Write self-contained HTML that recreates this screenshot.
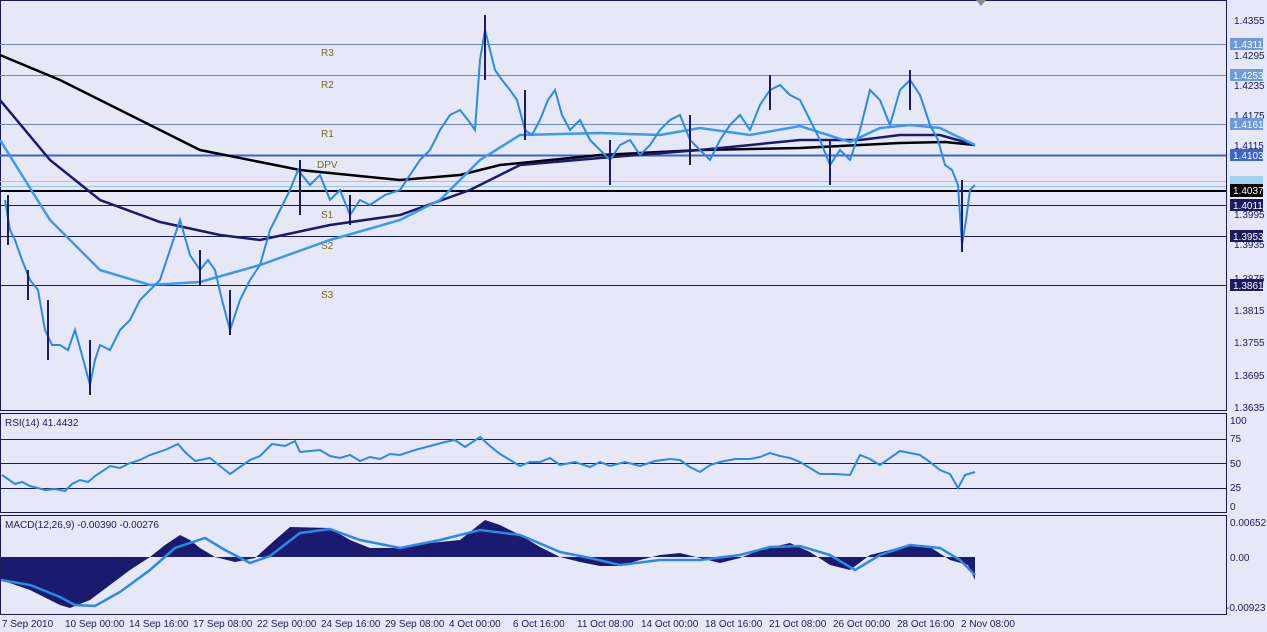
<!DOCTYPE html><html><head><style>
body{margin:0;width:1267px;height:632px;background:#e6e8f8;overflow:hidden;font-family:"Liberation Sans",sans-serif}
svg{display:block}
text{font-family:"Liberation Sans",sans-serif;font-size:10px}
</style></head><body>
<svg width="1267" height="632" viewBox="0 0 1267 632">
<rect width="1267" height="632" fill="#e6e8f8"/>
<g fill="none" stroke="#1a1a5e" stroke-width="1">
<rect x="0.5" y="0.5" width="1226" height="410"/>
<rect x="0.5" y="413.5" width="1226" height="99"/>
<rect x="0.5" y="515.5" width="1226" height="99"/>
</g>
<g stroke-width="1">
<line x1="0" x2="1226" y1="44.5" y2="44.5" stroke="#6b86c8"/>
<line x1="0" x2="1226" y1="75.5" y2="75.5" stroke="#6b86c8"/>
<line x1="0" x2="1226" y1="124.5" y2="124.5" stroke="#6b86c8"/>
<line x1="0" x2="1226" y1="155.5" y2="155.5" stroke="#3a64d0" stroke-width="2"/>
<line x1="0" x2="1226" y1="181.5" y2="181.5" stroke="#9fc4e8"/>
<line x1="0" x2="1226" y1="186.5" y2="186.5" stroke="#9fc4e8"/>
<line x1="0" x2="1226" y1="191" y2="191" stroke="#000" stroke-width="2"/>
<line x1="0" x2="1226" y1="205.5" y2="205.5" stroke="#1a1a5e"/>
<line x1="0" x2="1226" y1="236.5" y2="236.5" stroke="#1a1a5e"/>
<line x1="0" x2="1226" y1="285.5" y2="285.5" stroke="#1a1a5e"/>
</g>
<g fill="#7a6a1a" font-size="11"><text x="321" y="56">R3</text><text x="321" y="88">R2</text><text x="321" y="137">R1</text><text x="317" y="168">DPV</text><text x="321" y="218">S1</text><text x="321" y="249">S2</text><text x="321" y="298">S3</text></g>
<polyline fill="none" stroke="#000" stroke-width="2.5" points="0,55 60,80 120,110 200,150 300,170 400,180 460,175 500,165 600,155 700,150 800,148 900,143 945,142 975,145"/>
<polyline fill="none" stroke="#1a1a6e" stroke-width="2.5" points="0,100 50,160 100,200 160,222 220,235 260,240 330,225 400,215 470,190 520,165 600,158 700,150 800,140 860,140 900,135 940,135 975,145"/>
<polyline fill="none" stroke="#3a9af0" stroke-width="2.5" points="0,140 50,220 100,270 150,285 200,282 260,265 330,240 400,220 440,200 480,160 520,135 600,133 660,135 700,128 750,135 800,126 850,142 880,128 910,125 940,128 975,145"/>
<polyline fill="none" stroke="#2a8ae8" stroke-width="2" points="5,200 10,230 15,240 22,260 30,280 38,290 45,330 52,345 60,345 68,350 75,330 82,355 90,385 95,360 100,345 110,350 120,330 130,320 140,300 150,290 160,280 170,250 180,220 190,255 200,270 208,260 215,270 222,300 230,330 240,300 250,280 260,265 270,230 280,210 290,190 298,170 310,185 320,175 330,200 340,190 350,215 360,200 370,205 385,195 400,190 410,175 420,160 430,150 440,130 450,115 460,110 468,120 475,130 480,60 485,30 490,50 495,70 502,80 510,90 517,100 525,130 532,135 540,120 548,100 555,90 562,115 570,130 580,120 590,140 600,150 610,160 620,145 630,140 640,155 650,145 660,130 670,120 680,115 690,140 700,150 710,160 720,140 730,125 740,115 750,130 760,105 770,90 780,85 790,95 800,100 810,120 820,140 830,165 840,150 850,160 860,130 870,90 880,100 890,125 900,90 910,80 920,95 930,125 938,140 945,165 952,170 958,185 962,245 966,220 970,190 975,185"/>
<g stroke="#1a1a6e" stroke-width="2"><line x1="8" y1="195" x2="8" y2="245"/><line x1="28" y1="270" x2="28" y2="300"/><line x1="48" y1="300" x2="48" y2="360"/><line x1="90" y1="340" x2="90" y2="395"/><line x1="200" y1="250" x2="200" y2="285"/><line x1="230" y1="290" x2="230" y2="335"/><line x1="300" y1="160" x2="300" y2="215"/><line x1="350" y1="195" x2="350" y2="225"/><line x1="485" y1="15" x2="485" y2="80"/><line x1="525" y1="90" x2="525" y2="140"/><line x1="610" y1="140" x2="610" y2="185"/><line x1="690" y1="115" x2="690" y2="165"/><line x1="770" y1="75" x2="770" y2="110"/><line x1="830" y1="140" x2="830" y2="185"/><line x1="910" y1="70" x2="910" y2="110"/><line x1="962" y1="180" x2="962" y2="252"/></g>
<g fill="#1a1a5e"><text x="1234" y="24">1.4355</text><text x="1234" y="59">1.4295</text><text x="1234" y="89">1.4235</text><text x="1234" y="119">1.4175</text><text x="1234" y="149">1.4115</text><text x="1234" y="218">1.3995</text><text x="1234" y="248">1.3935</text><text x="1234" y="282">1.3875</text><text x="1234" y="314">1.3815</text><text x="1234" y="346">1.3755</text><text x="1234" y="379">1.3695</text><text x="1234" y="411">1.3635</text></g>
<g font-size="10">
<rect x="1230" y="38" width="33" height="12" fill="#6b9ae0"/><text x="1233" y="48" fill="#fff">1.4311</text>
<rect x="1230" y="69" width="33" height="12" fill="#6b9ae0"/><text x="1233" y="79" fill="#fff">1.4253</text>
<rect x="1230" y="118" width="33" height="12" fill="#6b9ae0"/><text x="1233" y="128" fill="#fff">1.4161</text>
<rect x="1230" y="149" width="33" height="12" fill="#3a64d0"/><text x="1233" y="159" fill="#fff">1.4103</text>
<rect x="1230" y="176" width="33" height="8" fill="#9fd4f0"/>
<rect x="1230" y="184" width="33" height="13" fill="#000"/><text x="1233" y="194" fill="#fff">1.4037</text>
<rect x="1230" y="199" width="33" height="12" fill="#1a1a5e"/><text x="1233" y="209" fill="#fff">1.4011</text>
<rect x="1230" y="230" width="33" height="12" fill="#1a1a5e"/><text x="1233" y="240" fill="#fff">1.3953</text>
<rect x="1230" y="279" width="33" height="12" fill="#1a1a5e"/><text x="1233" y="289" fill="#fff">1.3861</text>
</g>
<polygon points="976,0 986,0 981,6" fill="#888"/>
<text x="5" y="426" fill="#1a1a5e">RSI(14) 41.4432</text>
<g stroke="#1a1a5e"><line x1="0" x2="1226" y1="439.5" y2="439.5"/><line x1="0" x2="1226" y1="463.5" y2="463.5"/><line x1="0" x2="1226" y1="488.5" y2="488.5"/></g>
<polyline fill="none" stroke="#2a8ae8" stroke-width="2" points="2,475 15,484 22,482 30,486 45,490 55,489 65,491 72,484 80,480 88,482 95,476 110,466 120,468 130,463 140,460 150,455 165,450 178,444 185,452 195,461 210,458 220,466 230,474 240,467 250,460 260,456 272,444 285,446 295,441 300,452 320,450 330,456 340,458 350,455 360,461 370,457 380,459 390,454 400,455 415,450 430,446 445,442 455,440 465,447 480,437 490,446 500,454 510,460 520,466 530,462 540,462 550,458 560,465 575,462 590,467 600,462 610,466 625,462 640,466 655,461 670,459 680,460 690,467 700,472 710,465 720,462 735,459 750,459 760,457 770,453 780,456 790,458 800,462 810,468 820,474 835,474 850,475 860,455 870,459 880,465 890,458 900,451 910,453 920,455 930,462 940,470 950,474 958,488 965,475 975,472"/>
<g fill="#1a1a5e"><text x="1230" y="424">100</text><text x="1230" y="442">75</text><text x="1230" y="467">50</text><text x="1230" y="491">25</text><text x="1230" y="510">0</text></g>
<text x="5" y="528" fill="#1a1a5e">MACD(12,26,9) -0.00390 -0.00276</text>
<path fill="#1a1a6e" d="M1,557 L1,580 30,590 60,605 70,608 90,600 110,585 130,570 150,557 165,545 180,535 190,540 200,548 215,557 235,562 255,558 275,540 290,527 330,528 350,540 370,548 400,548 430,543 460,540 485,520 500,525 520,535 540,547 560,557 580,562 600,566 620,566 640,560 660,555 680,553 700,558 720,563 740,558 760,550 790,543 810,552 830,565 850,570 870,555 890,550 910,544 930,547 950,560 968,565 975,580 975,557 Z"/>
<polyline fill="none" stroke="#2a8ae8" stroke-width="2.5" points="1,580 30,585 60,597 75,605 95,606 120,592 150,570 175,548 205,538 225,550 250,563 270,556 300,533 330,529 360,540 400,548 440,540 480,530 520,535 560,552 590,558 620,565 660,560 700,560 740,555 770,547 800,546 830,555 855,570 880,555 910,545 940,548 960,560 975,575"/>
<g fill="#1a1a5e"><text x="1230" y="526">0.00652</text><text x="1230" y="561">0.00</text><text x="1226" y="611">-0.00923</text></g>
<g fill="#1a1a5e"><text x="2" y="627">7 Sep 2010</text><text x="65" y="627">10 Sep 00:00</text><text x="129" y="627">14 Sep 16:00</text><text x="193" y="627">17 Sep 08:00</text><text x="257" y="627">22 Sep 00:00</text><text x="321" y="627">24 Sep 16:00</text><text x="385" y="627">29 Sep 08:00</text><text x="449" y="627">4 Oct 00:00</text><text x="513" y="627">6 Oct 16:00</text><text x="577" y="627">11 Oct 08:00</text><text x="641" y="627">14 Oct 00:00</text><text x="705" y="627">18 Oct 16:00</text><text x="769" y="627">21 Oct 08:00</text><text x="833" y="627">26 Oct 00:00</text><text x="897" y="627">28 Oct 16:00</text><text x="961" y="627">2 Nov 08:00</text></g>
</svg></body></html>
